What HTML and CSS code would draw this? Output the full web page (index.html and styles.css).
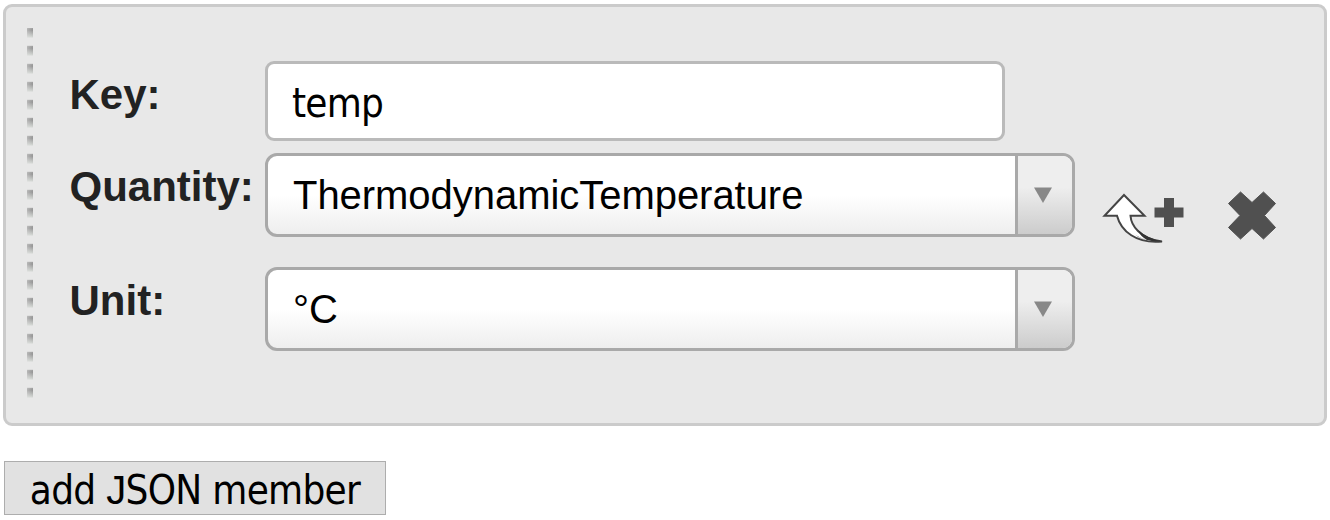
FILE: index.html
```html
<!DOCTYPE html>
<html lang="en">
<head>
<meta charset="utf-8">
<title>JSON members</title>
<link rel="stylesheet" href="styles.css">
</head>
<body>
<section class="member">
  <div class="grip"></div>
  <div class="fields">
    <label class="label" for="key">Key:</label>
    <input class="text-input" id="key" type="text" value="temp">
    <span class="label label-quantity">Quantity:</span>
    <div class="select">
      <span class="select-value">ThermodynamicTemperature</span>
      <span class="select-arrow"><svg width="20" height="16" viewBox="0 0 20 16"><path d="M1 .5h18L10 16z" fill="#888"/></svg></span>
    </div>
    <span class="label label-unit">Unit:</span>
    <div class="select select-unit">
      <span class="select-value">°C</span>
      <span class="select-arrow"><svg width="20" height="16" viewBox="0 0 20 16"><path d="M1 .5h18L10 16z" fill="#888"/></svg></span>
    </div>
  </div>
  <div class="actions">
    <svg class="icon-insert" width="84" height="54" viewBox="1102 190 84 54">
      <path d="M1124 195L1104.500 215.700H1117C1121 231 1136 244 1162 241.500Q1147 240 1138 231Q1131 224 1130.500 215.700H1144.500Z" fill="#fff" stroke="#444" stroke-width="2"/>
      <path d="M1133 233Q1142 242 1163 241.500Q1148 239 1138 230Q1140 236 1147 240Q1139 238 1133 233Z" fill="#333"/>
      <path d="M1164 198h10v9.500h9.500v10H1174v9.500h-10v-9.500h-9.500v-10h9.500z" fill="#505050"/>
    </svg>
    <svg class="icon-remove" width="50" height="50" viewBox="1227 190.500 50 50">
      <path d="M1240.500 192.500L1252 203L1263.500 192.500L1275.500 204L1264.500 216L1275.500 228L1263.500 239.500L1252 229L1240.500 239.500L1228.500 228L1240 216L1228.500 204Z" fill="#505050" stroke="#505050" stroke-linejoin="round"/>
    </svg>
  </div>
</section>
<button class="add-button" type="button">add <span class="cap-j">J</span>SON member</button>
</body>
</html>
```
FILE: styles.css
```css
* { box-sizing: border-box; }

body {
  margin: 0;
  padding: 4px 3px 0;
  background: #fff;
  font-family: "Liberation Sans", Arial, sans-serif;
}

.member {
  display: flex;
  height: 422px;
  width: 1324px;
  padding: 21px 45px 0 21px;
  border: 3px solid #cbcbcb;
  border-radius: 9px;
  background: #e8e8e8;
}

.grip {
  width: 6px;
  height: 370px;
  margin-right: 36px;
  background:
    linear-gradient(to right, rgba(232, 232, 232, .4), rgba(232, 232, 232, 0)),
    repeating-linear-gradient(#a0a0a0 0, #929292 2px, #d2d5d2 9px, #e8e8e8 10px, #e8e8e8 17px, #ccc 18px);
}

.fields {
  display: grid;
  grid-template-columns: 196px 810px;
  grid-template-rows: 80px 84px 84px;
  row-gap: 12px;
  align-content: start;
  padding-top: 33px;
  height: 340px;
}

.label {
  font-size: 42px;
  font-weight: bold;
  line-height: 48px;
  color: #222;
  padding: 10px 0 0 .500px;
  white-space: nowrap;
}

.label-unit { padding-top: 28px; }

.text-input {
  width: 740px;
  height: 80px;
  padding: 4px 24px 0;
  border: 3px solid #bababa;
  border-radius: 9px;
  background: #fff;
  color: #000;
  font: 40px "DejaVu Sans Condensed", "DejaVu Sans", sans-serif;
  letter-spacing: -.800px;
}

.select {
  display: flex;
  height: 84px;
  border: 3px solid #a9a9a9;
  border-radius: 12px;
  background: linear-gradient(#fff 50%, #eee);
  overflow: hidden;
}

.select-unit { margin-top: 18px; }

.select-value {
  flex: 1;
  padding-left: 25px;
  font-size: 40px;
  line-height: 78px;
  letter-spacing: -.040px;
  color: #000;
}

.select-arrow {
  display: flex;
  width: 57px;
  padding: 31px 0 0 15px;
  border-left: 3px solid #a9a9a9;
  background: linear-gradient(#eee 40%, #ccc);
}

.actions {
  display: flex;
  flex: none;
  margin: 162px 0 0 27px;
  gap: 41px;
}

.add-button {
  display: block;
  width: 382px;
  height: 54px;
  margin: 35px 0 0 1px;
  padding: 3px 0 0;
  border: 1px solid #adadad;
  border-radius: 0;
  background: #e1e1e1;
  color: #000;
  font: 40px "DejaVu Sans Condensed", "DejaVu Sans", sans-serif;
  letter-spacing: -.700px;
  white-space: nowrap;
}

.cap-j { font-family: "Liberation Sans", Arial, sans-serif; }
```
